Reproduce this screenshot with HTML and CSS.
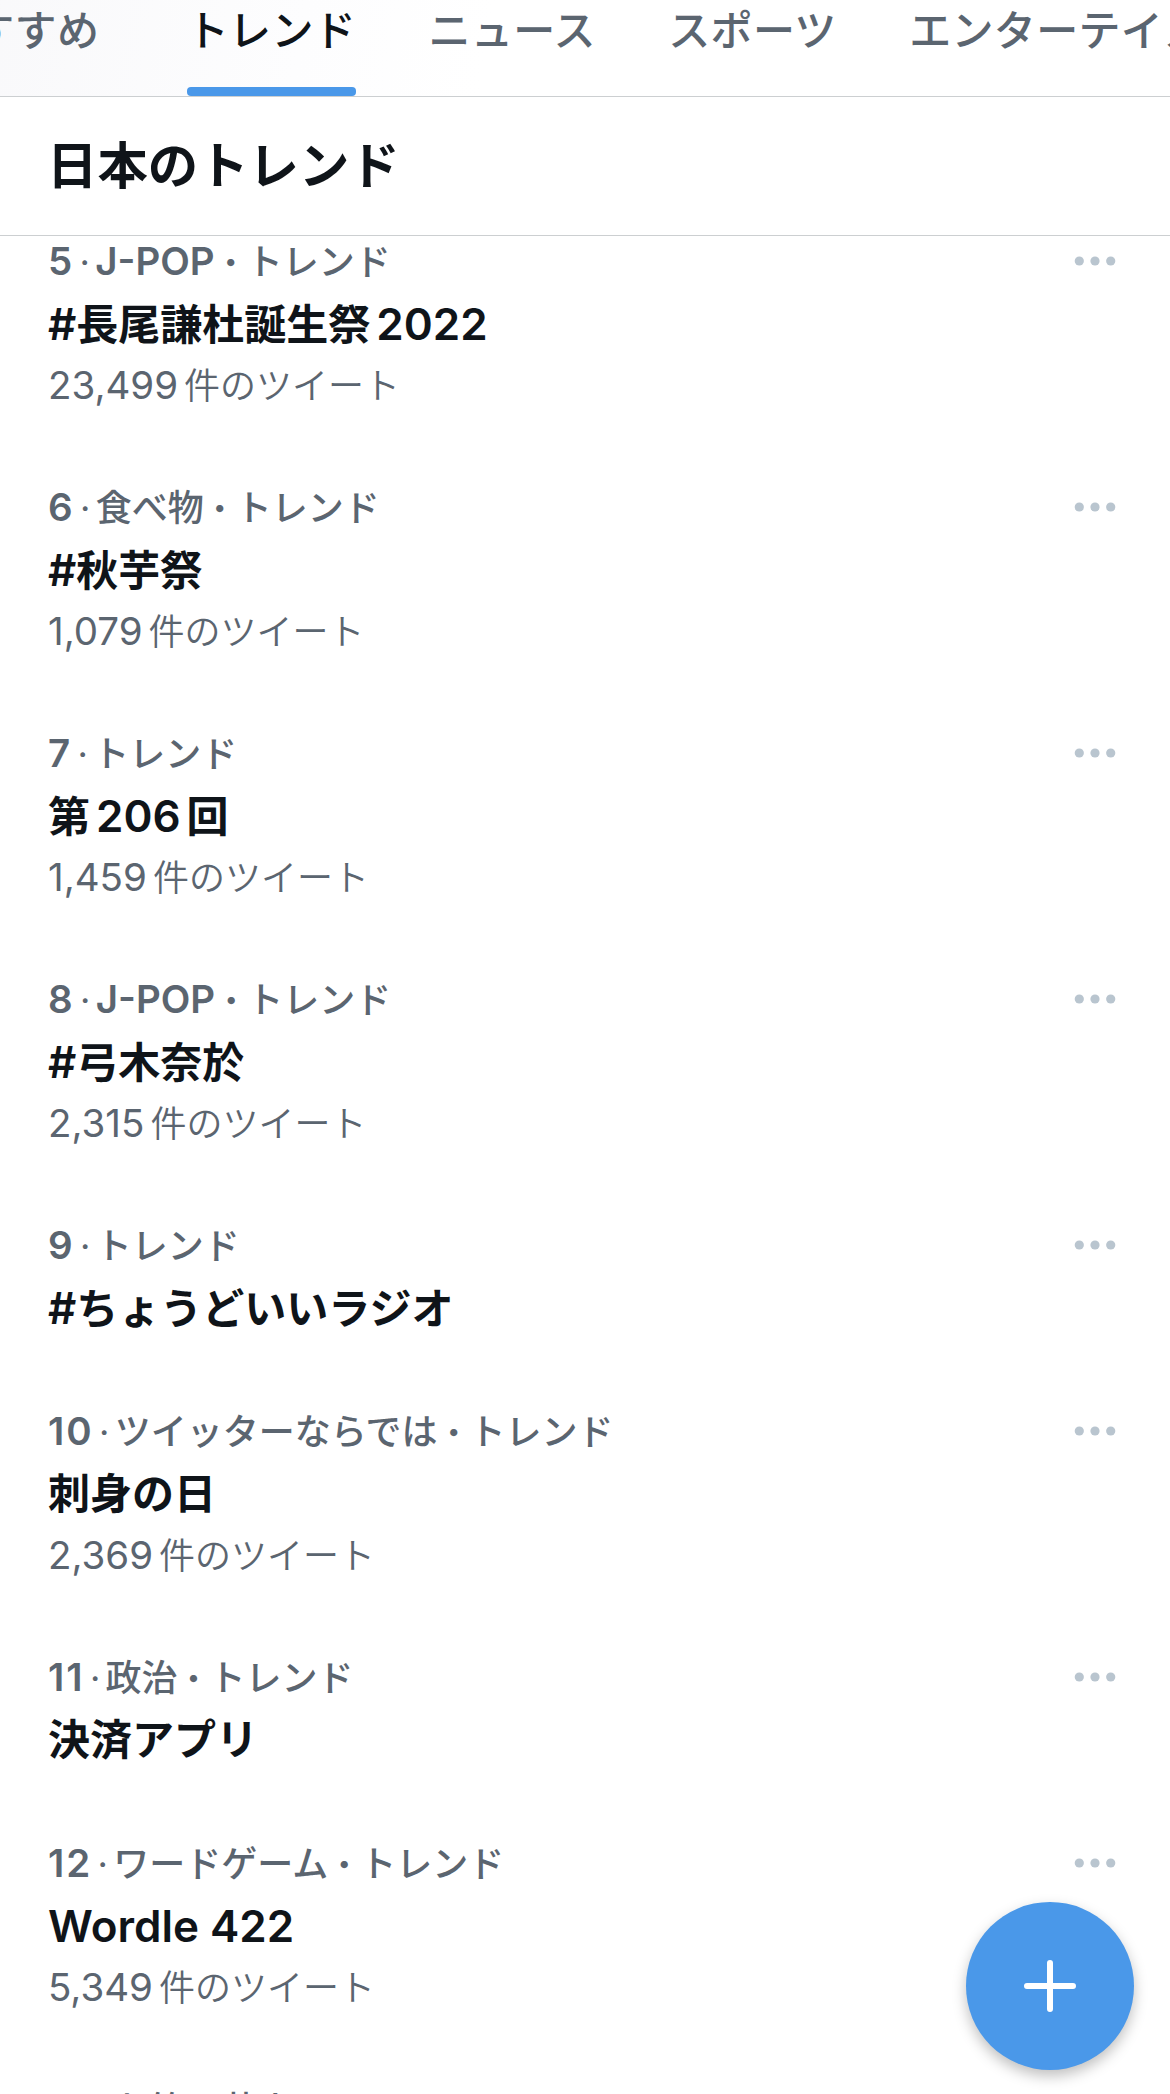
FILE: index.html
```html
<!DOCTYPE html>
<html lang="ja">
<head>
  <meta charset="UTF-8">
  <title>日本のトレンド</title>
  <link rel="stylesheet" href="styles.css">
</head>
<body>
  <header class="header">
    <nav class="tabs">
      <div class="tab">おすすめ</div>
      <div class="tab active">トレンド</div>
      <div class="tab">ニュース</div>
      <div class="tab">スポーツ</div>
      <div class="tab">エンターテイメント</div>
    </nav>
    <h1 class="title">日本のトレンド</h1>
  </header>

  <main class="trends" id="trends"></main>

  <button class="compose" aria-label="ツイート">
    <svg width="54" height="54" viewBox="0 0 54 54"><path d="M27 4v46M4 27h46" stroke="#fff" stroke-width="6" stroke-linecap="round"/></svg>
  </button>

  <script>
    const trends = [
      { rank: 5, category: 'J-POP', name: '#長尾謙杜誕生祭 2022', count: '23,499' },
      { rank: 6, category: '食べ物', name: '#秋芋祭', count: '1,079' },
      { rank: 7, name: '第 206 回', count: '1,459' },
      { rank: 8, category: 'J-POP', name: '#弓木奈於', count: '2,315' },
      { rank: 9, name: '#ちょうどいいラジオ' },
      { rank: 10, category: 'ツイッターならでは', name: '刺身の日', count: '2,369' },
      { rank: 11, category: '政治', name: '決済アプリ' },
      { rank: 12, category: 'ワードゲーム', name: 'Wordle 422', count: '5,349' },
      { rank: 13, category: 'お笑い芸人', name: '' }
    ];

    // latin letters and digits are set a little larger than the kana
    const latin = (text) => text.replace(/[#\w,-]+( [\w]+)*/g, '<span class="latin">$&</span>');

    document.getElementById('trends').innerHTML = trends.map((t) => `
      <article class="trend">
        <div class="text">
          <div class="meta"><span class="latin rank">${t.rank}</span><span class="dot small">·</span>${t.category ? latin(t.category) + '<span class="dot">·</span>' : ''}トレンド</div>
          <div class="name">${latin(t.name).replace(/ (?=<)|(?<=>) /g, '<span class="gap"></span>')}</div>
          ${t.count ? `<div class="count">${latin(t.count)}<span class="gap"></span>件のツイート</div>` : ''}
        </div>
        <svg class="more" width="42" height="10" viewBox="0 0 42 10"><circle cx="5.3" cy="5" r="4.6"/><circle cx="21" cy="5" r="4.6"/><circle cx="36.7" cy="5" r="4.6"/></svg>
      </article>`).join('');
  </script>
</body>
</html>
```
FILE: styles.css
```css
* {
  box-sizing: border-box;
}

body {
  margin: 0;
  height: 2094px;
  overflow: hidden;
  background: #fff;
  color: #0f1419;
  font-family: Inter, "Noto Sans CJK JP", sans-serif;
}

.header {
  position: relative;
  z-index: 1;
  height: 236px;
  background: #fff;
  border-bottom: 1px solid #cccfd1;
}

.tabs {
  display: flex;
  gap: 72.6px;
  height: 97px;
  margin-left: -70px;
  overflow: hidden;
  background: linear-gradient(100deg, #f8f8fa, #fdfdfe 30%, #fff 45%);
  border-bottom: 1px solid #cccfd1;
}

.tab {
  flex: none;
  height: 96px;
  line-height: 61px;
  font-size: 42px;
  font-weight: 500;
  letter-spacing: 0.3px;
  color: #5b6570;
}

.tab:first-child {
  margin-right: 15px;
}

.tab.active {
  color: #0f1419;
}

.tab.active::after {
  content: "";
  display: block;
  height: 9px;
  margin-top: 26px;
  border-radius: 4px;
  background: #4a98e9;
}

.title {
  margin: 0;
  padding-left: 47px;
  line-height: 138px;
  font-size: 50.4px;
  font-weight: 700;
}

.trends {
  margin-top: -8px;
}

.trend {
  display: flex;
  justify-content: space-between;
  align-items: flex-start;
  padding: 0 54px 59px 48px;
}

.text {
  white-space: nowrap;
}

.meta {
  height: 65px;
  line-height: 66px;
  font-size: 36px;
  font-weight: 500;
  color: #5b6570;
}

.meta .latin {
  font-size: 38.5px;
  font-weight: 600;
}

.meta .rank {
  letter-spacing: 2px;
}

.name {
  height: 62px;
  line-height: 62px;
  font-size: 42px;
  font-weight: 700;
}

.name .latin {
  font-size: 44px;
  font-weight: 600;
}

.count {
  height: 60px;
  line-height: 60px;
  font-size: 36px;
  font-weight: 350;
  color: #5b6570;
}

.count .latin {
  font-size: 38.5px;
  font-weight: 400;
}

.gap {
  display: inline-block;
  width: 6px;
}

.dot {
  display: inline-block;
  width: 32px;
  text-align: center;
  font-weight: 900;
}

.dot.small {
  width: 21px;
  font-weight: 400;
}

.more {
  margin-top: 28px;
  fill: #b9c5cf;
}

.compose {
  position: fixed;
  right: 36px;
  bottom: 24px;
  display: flex;
  align-items: center;
  justify-content: center;
  width: 168px;
  height: 168px;
  padding: 0;
  border: 0;
  border-radius: 50%;
  background: #4a98e9;
  box-shadow: 0 6px 14px rgba(0, 0, 0, 0.25);
}
```
